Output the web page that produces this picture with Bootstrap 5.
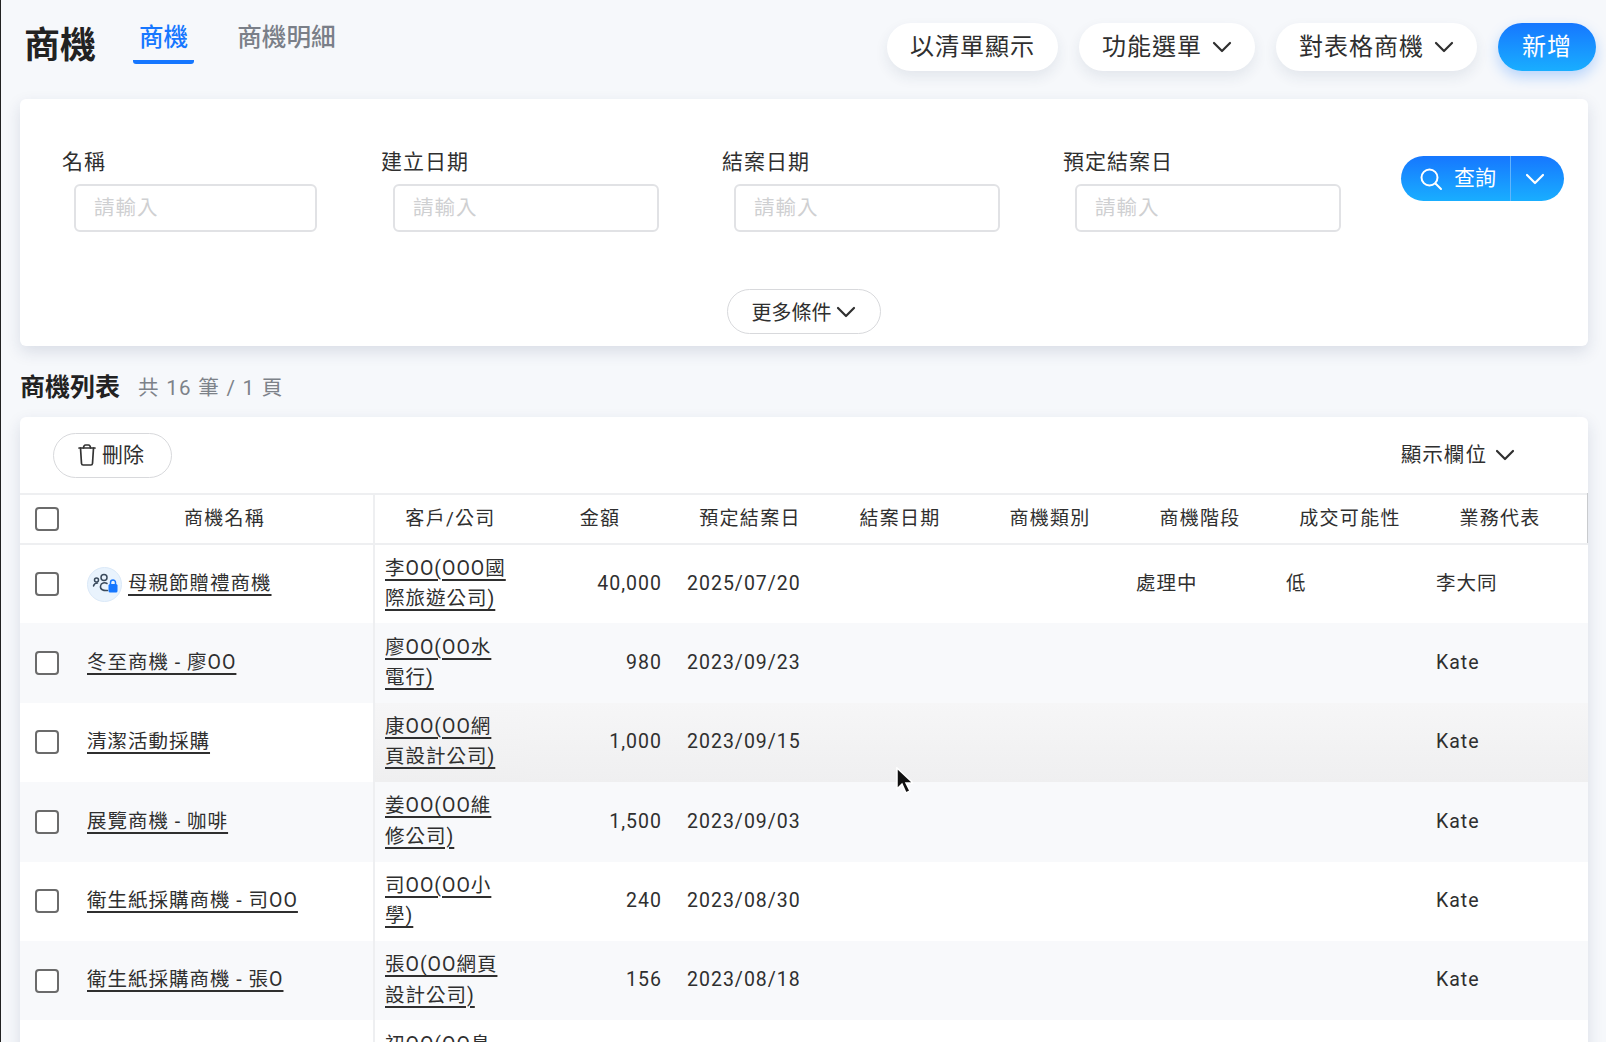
<!DOCTYPE html>
<html lang="zh-Hant">
<head>
<meta charset="utf-8">
<title>商機</title>
<link href="https://cdn.jsdelivr.net/npm/bootstrap@5.3.0/dist/css/bootstrap.min.css" rel="stylesheet">
<style>
:root{--ink:#2f2f2f;--blue-a:#1677ff;--blue-b:#19aeff;--line:#eeeff1;}
html,body{height:1042px;overflow:hidden;}
body{background:#f6f8fb;font-family:Roboto,"Noto Sans CJK TC",sans-serif;color:var(--ink);letter-spacing:1px;border-left:1px solid #222;position:relative;}
.page-wrap{padding:0 18px 0 19px;}
.top-bar{height:99px;padding-left:4px;}
.page-title{font-size:36px;font-weight:700;line-height:1;margin:0;letter-spacing:0;color:#222;margin-top:-8px;}
.tab-list{margin-left:37px;margin-top:-19px;gap:37px;}
.tab-item{font-size:24.6px;font-weight:500;color:#7a7f88;text-decoration:none;letter-spacing:0;padding:0 6px 5px;line-height:34px;display:block;border-bottom:4px solid transparent;border-radius:0 0 3px 3px;margin-top:4px;}
.tab-item.on{color:var(--blue-a);border-bottom-color:var(--blue-a);}
.button-row{gap:21px;margin-top:-5px;margin-right:-8px;}
.pill{height:48px;border-radius:24px;font-size:24px;letter-spacing:1px;background:#fff;color:var(--ink);border:0;box-shadow:0 6px 14px rgba(30,50,90,.09);padding:0 23px;display:flex;align-items:center;gap:10px;line-height:1;}
.pill:hover{background:#fff;color:var(--ink);}
.pill-blue{background:linear-gradient(#1677ff,#19aeff);color:#fff;box-shadow:0 6px 14px rgba(22,119,255,.28);padding:0 24px;}
.pill-blue:hover{color:#fff;}
.panel{background:#fff;border-radius:6px;box-shadow:0 6px 16px rgba(30,50,90,.13);}
.filter-panel{height:247px;padding:48px 24px 12px 42px;}
.field-one{width:255px;margin-right:64px;}
.field-wide{width:278px;margin-right:63px;}
.field-name{font-size:21px;line-height:30px;margin-bottom:7px;display:block;font-weight:400;}
.field-input{margin-left:12px;width:calc(100% - 12px);height:48px;border:2px solid #e1e2e5;border-radius:6px;font-size:20.5px;padding:0 18px;letter-spacing:1px;}
.field-input::placeholder{color:#cfd0d2;}
.search-group{margin-top:9px;height:45px;width:163px;border-radius:23px;background:linear-gradient(#1677ff,#19aeff);margin-left:-3px;overflow:hidden;}
.search-main,.search-caret{border:0;background:transparent;color:#fff;font-size:21px;height:45px;display:flex;align-items:center;padding:0;}
.search-main{width:110px;padding-left:18px;gap:11px;border-right:1px solid #63b4fb;}
.search-caret{flex:1;justify-content:center;padding-right:6px;}
.more-row{margin-top:57px;padding-right:19px;}
.ghost-pill{height:45px;border:1px solid #d8d9dc;border-radius:23px;background:#fff;color:var(--ink);font-size:20px;display:inline-flex;align-items:center;gap:4px;padding:2px 24px 0;}
.ghost-pill svg{margin-top:-2px;}
.ghost-pill:hover{background:#fff;color:var(--ink);border-color:#d8d9dc;}
.list-head{margin-top:25px;margin-bottom:12px;height:34px;gap:18px;}
.list-title{font-size:25px;font-weight:700;margin:0;letter-spacing:0;color:#222;}
.list-count{font-size:20.5px;color:#7d8289;letter-spacing:1.3px;}
.table-panel{height:760px;overflow:hidden;}
.tool-row{height:76px;padding:0 73px 0 33px;}
.trash-btn{width:119px;justify-content:center;padding:2px 4px 0 0;gap:5px;font-size:21px;}
.col-picker{font-size:20.6px;display:flex;align-items:center;gap:8px;}
.deal-table{table-layout:fixed;width:1568px;margin:0;font-size:19.5px;color:var(--ink);}
.deal-table>thead>tr>th{height:50px;padding:0 0 0 2px;text-align:center;font-weight:400;vertical-align:middle;border-top:2px solid var(--line);border-bottom:2px solid var(--line);font-size:19px;letter-spacing:1.3px;}
.deal-table>tbody>tr>td{height:79.4px;padding:0 12px;vertical-align:middle;line-height:30.5px;color:var(--ink);}
.deal-table>thead>tr>th.fix-cell,.deal-table>tbody>tr>td.fix-cell{border-right:2px solid var(--line);padding:0;}
.deal-table>thead>tr>th.fix-cell{text-align:left;}
.deal-table>tbody>tr>td.num-cell{text-align:right;padding-right:12px;}
.deal-table>tbody>tr>td.client-cell{padding:0 16px 0 10px;}
.deal-table>tbody>tr>td.plain-date{letter-spacing:1px;padding-left:13px;}
.deal-table>thead>tr>th.edge-cell{border-right:2px solid #c9cbce;}
.deal-table a{color:var(--ink);text-underline-offset:4px;text-decoration-thickness:1.5px;}
.zebra{--bs-table-bg:#f8f9fb;}
.deal-table>tbody>tr.hovered>td:not(.fix-cell){background:linear-gradient(#f6f6f7,#efeff0);}
.name-wrap{display:flex;align-items:center;}
.head-wrap{display:flex;align-items:center;}
.tick{width:24px;height:24px;flex:none;border:2px solid #6b6b6b;border-radius:4px;margin:0 28px 0 15px;appearance:none;background:#fff;display:block;}
.head-label{width:275px;text-align:center;}
.badge-round{width:35px;height:35px;border-radius:50%;background:#e9f3fd;border:1px solid #dbe9f8;display:flex;align-items:center;justify-content:center;margin-right:6px;flex:none;}
.mouse-arrow{position:absolute;left:894px;top:767px;width:18px;height:28px;z-index:5;}
</style>
</head>
<body>
<svg width="0" height="0" class="d-block" aria-hidden="true"><defs>
<symbol id="chev" viewBox="0 0 20 12"><path d="M2 2l8 8 8-8" fill="none" stroke="currentColor" stroke-width="2.2" stroke-linecap="round" stroke-linejoin="round"/></symbol>
</defs></svg>
<div class="page-wrap">
  <div class="top-bar d-flex align-items-center">
    <h1 class="page-title">商機</h1>
    <nav class="tab-list d-flex">
      <a class="tab-item on" href="#">商機</a>
      <a class="tab-item" href="#">商機明細</a>
    </nav>
    <div class="button-row d-flex ms-auto">
      <button class="btn pill" type="button">以清單顯示</button>
      <button class="btn pill" type="button">功能選單<svg width="20" height="12"><use href="#chev"/></svg></button>
      <button class="btn pill" type="button">對表格商機<svg width="20" height="12"><use href="#chev"/></svg></button>
      <button class="btn pill pill-blue" type="button">新增</button>
    </div>
  </div>

  <section class="panel filter-panel">
    <div class="d-flex align-items-start">
      <div class="field-one"><label class="field-name">名稱</label><input class="form-control field-input" placeholder="請輸入"></div>
      <div class="field-wide"><label class="field-name">建立日期</label><input class="form-control field-input" placeholder="請輸入"></div>
      <div class="field-wide"><label class="field-name">結案日期</label><input class="form-control field-input" placeholder="請輸入"></div>
      <div class="field-wide"><label class="field-name">預定結案日</label><input class="form-control field-input" placeholder="請輸入"></div>
      <div class="search-group d-flex">
        <button class="search-main" type="button"><svg width="24" height="24" viewBox="0 0 24 24" fill="none" stroke="#fff" stroke-width="2" stroke-linecap="round"><circle cx="10.5" cy="10.5" r="8"/><path d="M16.5 16.5l5.5 5.5"/></svg>查詢</button>
        <button class="search-caret" type="button" aria-label="展開"><svg width="20" height="12"><use href="#chev"/></svg></button>
      </div>
    </div>
    <div class="more-row d-flex justify-content-center">
      <button class="btn ghost-pill" type="button">更多條件<svg width="20" height="12"><use href="#chev"/></svg></button>
    </div>
  </section>

  <div class="list-head d-flex align-items-center">
    <h2 class="list-title">商機列表</h2>
    <span class="list-count">共 16 筆 / 1 頁</span>
  </div>

  <section class="panel table-panel">
    <div class="tool-row d-flex align-items-center justify-content-between">
      <button class="btn ghost-pill trash-btn" type="button"><svg width="20" height="24" viewBox="0 0 20 24" fill="none" stroke="#333" stroke-width="1.7" stroke-linejoin="round" stroke-linecap="round"><path d="M2 5h16"/><path d="M3.5 5l1 15.5c.1 1 .8 1.5 1.6 1.5h7.8c.8 0 1.5-.5 1.6-1.5l1-15.5"/><path d="M6.5 5c.2-2 1-3 2-3h3c1 0 1.8 1 2 3"/></svg>刪除</button>
      <div class="col-picker">顯示欄位<svg width="20" height="12"><use href="#chev"/></svg></div>
    </div>
    <table class="table table-borderless deal-table">
      <colgroup><col style="width:354px"><col style="width:150px"><col style="width:150px"><col style="width:150px"><col style="width:150px"><col style="width:150px"><col style="width:150px"><col style="width:150px"><col style="width:150px"><col style="width:14px"></colgroup>
      <thead>
        <tr>
          <th class="fix-cell"><div class="head-wrap"><input class="tick" type="checkbox" aria-label="全選"><span class="head-label">商機名稱</span></div></th>
          <th>客戶/公司</th><th>金額</th><th>預定結案日</th><th>結案日期</th><th>商機類別</th><th>商機階段</th><th>成交可能性</th><th>業務代表</th><th class="edge-cell"></th>
        </tr>
      </thead>
      <tbody>
        <tr>
          <td class="fix-cell"><div class="name-wrap"><input class="tick" type="checkbox" aria-label="選取"><span class="badge-round"><svg width="26" height="22" viewBox="0 0 26 22" fill="none" stroke="#3a4a5c" stroke-width="1.5" stroke-linecap="round"><circle cx="4.5" cy="7" r="2"/><circle cx="12" cy="4.5" r="3"/><path d="M1.5 13c.5-2 2-3 4-3"/><path d="M15 10.5c-2-1.200-6-1-6.500 2.500s3 5 7 4.500"/><path d="M18.500 11v-1.500a2.500 2.500 0 0 1 5 0V11" stroke="#1677ff"/><rect x="16.500" y="11" width="9" height="8.500" rx="1.500" fill="#1677ff" stroke="none"/></svg></span><a href="#">母親節贈禮商機</a></div></td>
          <td class="client-cell"><a href="#">李OO(OOO國際旅遊公司)</a></td><td class="num-cell">40,000</td><td class="plain-date">2025/07/20</td><td></td><td></td><td>處理中</td><td>低</td><td>李大同</td><td></td>
        </tr>
        <tr class="zebra">
          <td class="fix-cell"><div class="name-wrap"><input class="tick" type="checkbox" aria-label="選取"><a href="#">冬至商機 - 廖OO</a></div></td>
          <td class="client-cell"><a href="#">廖OO(OO水電行)</a></td><td class="num-cell">980</td><td class="plain-date">2023/09/23</td><td></td><td></td><td></td><td></td><td>Kate</td><td></td>
        </tr>
        <tr class="hovered">
          <td class="fix-cell"><div class="name-wrap"><input class="tick" type="checkbox" aria-label="選取"><a href="#">清潔活動採購</a></div></td>
          <td class="client-cell"><a href="#">康OO(OO網頁設計公司)</a></td><td class="num-cell">1,000</td><td class="plain-date">2023/09/15</td><td></td><td></td><td></td><td></td><td>Kate</td><td></td>
        </tr>
        <tr class="zebra">
          <td class="fix-cell"><div class="name-wrap"><input class="tick" type="checkbox" aria-label="選取"><a href="#">展覽商機 - 咖啡</a></div></td>
          <td class="client-cell"><a href="#">姜OO(OO維修公司)</a></td><td class="num-cell">1,500</td><td class="plain-date">2023/09/03</td><td></td><td></td><td></td><td></td><td>Kate</td><td></td>
        </tr>
        <tr>
          <td class="fix-cell"><div class="name-wrap"><input class="tick" type="checkbox" aria-label="選取"><a href="#">衛生紙採購商機 - 司OO</a></div></td>
          <td class="client-cell"><a href="#">司OO(OO小學)</a></td><td class="num-cell">240</td><td class="plain-date">2023/08/30</td><td></td><td></td><td></td><td></td><td>Kate</td><td></td>
        </tr>
        <tr class="zebra">
          <td class="fix-cell"><div class="name-wrap"><input class="tick" type="checkbox" aria-label="選取"><a href="#">衛生紙採購商機 - 張O</a></div></td>
          <td class="client-cell"><a href="#">張O(OO網頁設計公司)</a></td><td class="num-cell">156</td><td class="plain-date">2023/08/18</td><td></td><td></td><td></td><td></td><td>Kate</td><td></td>
        </tr>
        <tr>
          <td class="fix-cell"></td>
          <td class="client-cell"><a href="#">初OO(OO島嶼旅行社)</a></td><td></td><td></td><td></td><td></td><td></td><td></td><td></td><td></td>
        </tr>
      </tbody>
    </table>
  </section>
</div>
<svg class="mouse-arrow" viewBox="0 0 18 28"><path d="M2 1v21l5-5 4 9 4-2-4-8h7z" fill="#111" stroke="#fff" stroke-width="1.500"/></svg>
</body>
</html>
